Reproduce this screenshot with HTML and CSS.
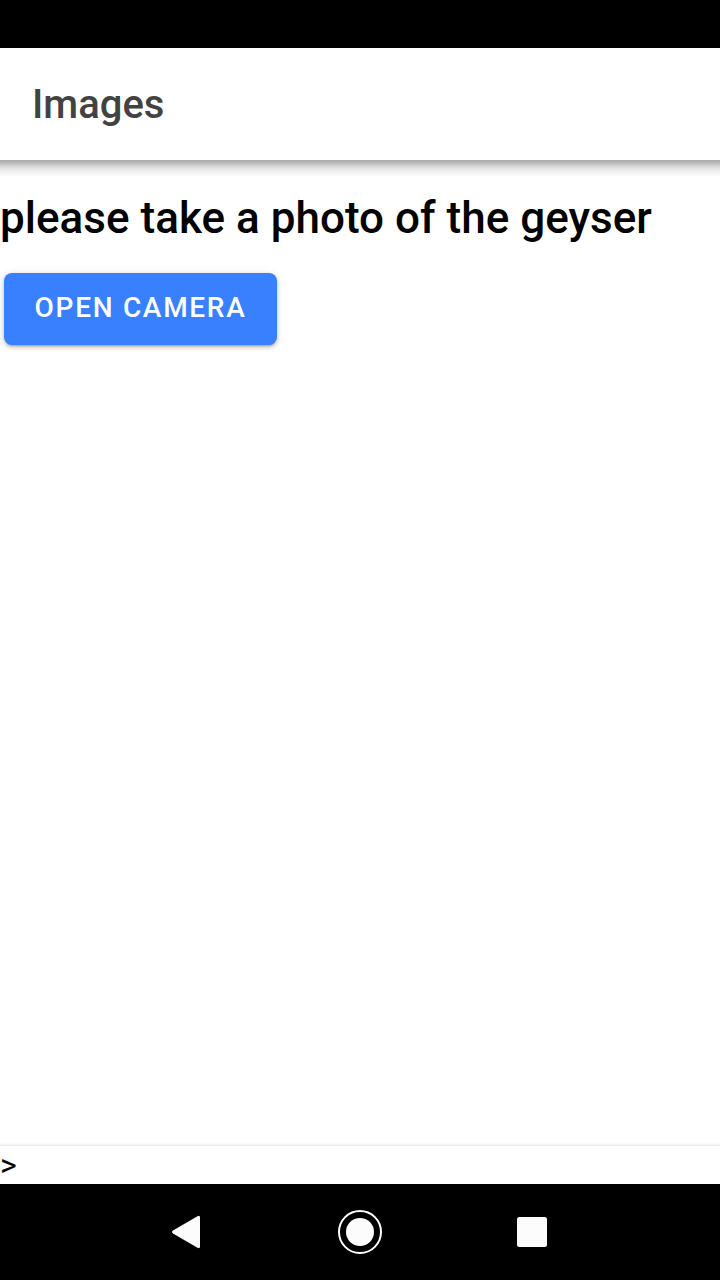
FILE: index.html
```html
<!DOCTYPE html>
<html lang="en">
<head>
<meta charset="utf-8">
<title>Images</title>
<link rel="stylesheet" href="styles.css">
</head>
<body>
<div class="screen">
  <div class="status-bar"></div>
  <header class="toolbar"><h1 class="title">Images</h1></header>
  <main class="content">
    <h2 class="prompt">please take a photo of the geyser</h2>
    <button class="button" type="button">OPEN CAMERA</button>
  </main>
  <footer class="footer">&gt;</footer>
  <nav class="nav-bar">
    <svg class="nav-icons" width="720" height="72" viewBox="0 0 720 72" fill="#fcfcfc">
      <path d="M173 34.500 L197.500 20.200 Q200 19 200 21.500 V50.500 Q200 53 197.500 51.800 L173 37.500 Q171 36 173 34.500 Z"/>
      <circle cx="360" cy="36" r="14"/>
      <circle cx="360" cy="36" r="21" fill="none" stroke="#fff" stroke-width="2"/>
      <rect x="517" y="21" width="30" height="30" rx="2.500"/>
    </svg>
  </nav>
</div>
</body>
</html>
```

FILE: styles.css
```css
body { margin: 0; background: #fff; font-family: Roboto, sans-serif; }
.screen { display: flex; flex-direction: column; height: 1280px; width: 720px; overflow: hidden; }
.status-bar { height: 48px; background: #000; flex: none; }
.toolbar { display: flex; align-items: center; box-sizing: border-box; height: 112px; padding: 2px 32px 0; flex: none; }
.title { margin: 0; font-size: 40px; font-weight: 500; color: #424242; line-height: 48px; }
.content { flex: 1; display: flow-root; background: linear-gradient(#aaa, #b4b4b4 2px, #cbcbcb 5px, #e1e1e1 8px, #f2f2f2 12px, #fbfbfb 16px, #fff 16px) top / 100% 17px no-repeat, linear-gradient(#fff, #f9f9f9 2px, #e6e6e6 4px) bottom / 100% 4px no-repeat; }
.prompt { margin: 32px 0 28px; font-size: 44px; font-weight: 500; line-height: 53px; letter-spacing: .02px; color: #000; white-space: nowrap; }
.button { display: block; box-sizing: border-box; width: 273px; height: 72px; margin-left: 4px; padding: 0 0 2px; border: 0; border-radius: 8px; background: #3880ff; color: #fff; font: 500 28px/70px Roboto, sans-serif; letter-spacing: 1.7px; white-space: nowrap; box-shadow: 0 3px 2px -2px rgba(0,0,0,.2), 0 2px 4px rgba(0,0,0,.2), 0 1px 8px rgba(0,0,0,.1); }
.footer { height: 38px; flex: none; font-size: 32px; line-height: 38px; color: #000; }
.nav-bar { height: 84px; padding-top: 12px; flex: none; background: #000; }
.nav-icons { display: block; }
```
